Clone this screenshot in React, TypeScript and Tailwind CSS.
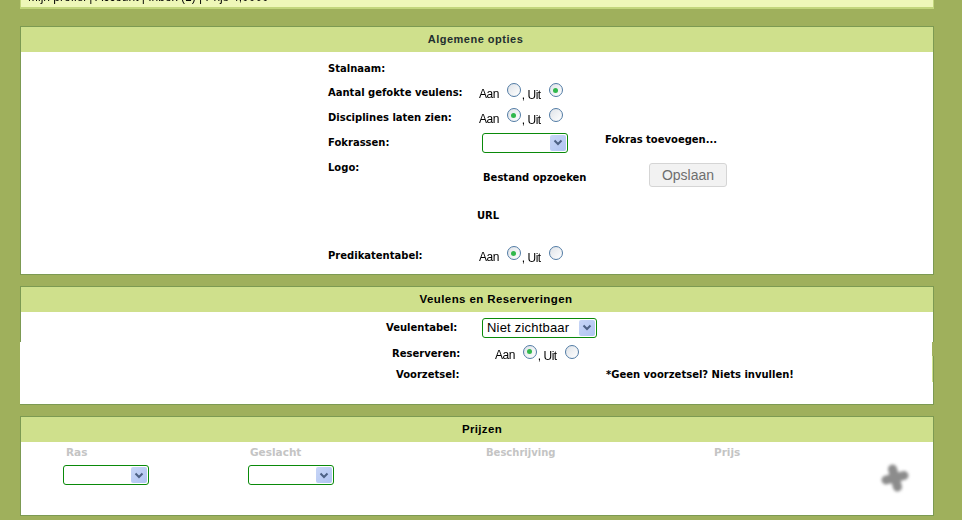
const labelFont = "font-['DejaVu_Sans','Verdana',sans-serif] font-bold text-[10px] leading-[12px] text-black";
const plainFont = "font-['Liberation_Sans',Arial,sans-serif] text-[12px] leading-[14px] text-black tracking-[-0.5px] opacity-[0.99]";
const mutedFont = "font-['DejaVu_Sans','Verdana',sans-serif] font-bold leading-[12px] text-[#c4c4c4]";

function Radio({ checked }: { checked?: boolean }) {
    return (
        <span className="flex h-[14px] w-[14px] items-center justify-center rounded-full border border-[#4f7aa3] bg-gradient-to-br from-[#dfe3e8] to-white">
            {checked && <span className="h-[5px] w-[5px] rounded-full bg-[#2fb84a]" />}
        </span>
    );
}

function OnOff({ on }: { on: boolean }) {
    return (
        <div className={`flex items-center ${plainFont}`}>
            <span className="mt-[2px]">Aan</span>
            <span className="ml-[8px] -mt-[5px]"><Radio checked={on} /></span>
            <span className="ml-[1px] mt-[4px]">, Uit</span>
            <span className="ml-[8px] -mt-[5px]"><Radio checked={!on} /></span>
        </div>
    );
}

function Select({ value, width }: { value?: string; width: string }) {
    return (
        <div className={`flex h-[20px] items-center justify-between rounded-[3px] border border-[#0a8a0a] bg-white pl-[4px] pr-[1px] ${width}`}>
            <span className="font-['Liberation_Sans',Arial,sans-serif] text-[13px] leading-none tracking-[0.2px] text-black">{value}</span>
            <span className="flex h-[16px] w-[16px] items-center justify-center rounded-[2px] bg-gradient-to-br from-[#c8d6f6] to-[#b0c4f2]">
                <svg width="10" height="7" viewBox="0 0 10 7" fill="none">
                    <path d="M1.5 1.5 5 5l3.5-3.5" stroke="#4d6185" strokeWidth="2" />
                </svg>
            </span>
        </div>
    );
}

function Panel({ title, titleClass, height, children }: { title: string; titleClass: string; height: string; children: React.ReactNode }) {
    return (
        <section className={`border border-[#7c9a52] bg-white ${height}`}>
            <h2 className={`flex h-[25px] items-center justify-center bg-[#cfe08c] font-['Liberation_Sans',Arial,sans-serif] font-bold ${titleClass}`}>
                {title}
            </h2>
            {children}
        </section>
    );
}

export default function App() {
    return (
        <div className="h-[520px] w-[962px] overflow-hidden bg-[#9fb05c] pl-[20px]">
            {/* Top bar, cut off by the window */}
            <div className="h-[9px] w-[914px] overflow-hidden border-x border-b-2 border-[#c2d67c] bg-[#eef7b8] pl-[7px]">
                <p className={`-mt-[10px] ${plainFont} tracking-normal`}>Mijn profiel | Account | Inbox (1) | Prijs 4,0000</p>
            </div>

            <div className="mt-[17px] flex w-[914px] flex-col gap-[11px]">
                {/* Algemene opties */}
                <Panel title="Algemene opties" titleClass="pr-[3px] text-[11px] tracking-[0.5px] text-[#1f2f2f]" height="h-[249px]">
                    <div className="pl-[307px]">
                        <div className={`flex h-[33px] items-center ${labelFont}`}>Stalnaam:</div>
                        <div className="-mt-[5px] flex h-[25px] items-center">
                            <span className={`w-[151px] ${labelFont}`}>Aantal gefokte veulens:</span>
                            <OnOff on={false} />
                        </div>
                        <div className="flex h-[25px] items-center">
                            <span className={`w-[151px] ${labelFont}`}>Disciplines laten zien:</span>
                            <OnOff on={true} />
                        </div>
                        <div className="flex h-[25px] items-center">
                            <span className={`w-[154px] ${labelFont}`}>Fokrassen:</span>
                            <Select width="w-[86px]" />
                            <span className={`ml-[37px] -mt-[5px] ${labelFont}`}>Fokras toevoegen...</span>
                        </div>
                        <div className="flex h-[47px]">
                            <span className={`mt-[7px] w-[155px] ${labelFont}`}>Logo:</span>
                            <span className={`mt-[17px] w-[166px] ${labelFont}`}>Bestand opzoeken</span>
                            <button className="mt-[8px] h-[24px] w-[78px] rounded-[3px] border border-[#d5d5d5] bg-[#f2f2f2] font-['Liberation_Sans',Arial,sans-serif] text-[14px] text-[#6e6e6e]">
                                Opslaan
                            </button>
                        </div>
                        <div className={`mt-[8px] pl-[149px] ${labelFont}`}>URL</div>
                        <div className="mt-[21px] flex h-[25px] items-center">
                            <span className={`w-[151px] ${labelFont}`}>Predikatentabel:</span>
                            <OnOff on={true} />
                        </div>
                    </div>
                </Panel>

                {/* Veulens en Reserveringen */}
                <div className="relative">
                    <Panel title="Veulens en Reserveringen" titleClass="pl-[38px] text-[11.5px] tracking-[0.4px] text-black" height="h-[119px]">
                        <div className="flex h-[31px] items-center pl-[365px]">
                            <span className={`w-[96px] ${labelFont}`}>Veulentabel:</span>
                            <Select value="Niet zichtbaar" width="w-[115px]" />
                        </div>
                        <div className="flex h-[22px] items-center pl-[371px]">
                            <span className={`w-[103px] ${labelFont}`}>Reserveren:</span>
                            <OnOff on={true} />
                        </div>
                        <div className="-mt-[2px] flex h-[23px] items-center pl-[375px]">
                            <span className={`w-[210px] ${labelFont}`}>Voorzetsel:</span>
                            <span className={labelFont}>*Geen voorzetsel? Niets invullen!</span>
                        </div>
                    </Panel>
                    {/* Row that overflows the panel border */}
                    <div className="absolute left-0 top-[56px] h-[62px] w-[1px] bg-white" />
                    <div className="absolute right-0 top-[56px] h-[14px] w-[2px] bg-[#9fb05c]" />
                    <div className="absolute right-[1px] top-[70px] h-[26px] w-[1px] bg-[#cfe08c]" />
                </div>

                {/* Prijzen */}
                <Panel title="Prijzen" titleClass="pl-[10px] text-[11.5px] tracking-[0.35px] text-black" height="h-[100px]">
                    <div className="relative flex h-[74px]">
                        <div className="ml-[42px] w-[185px]">
                            <p className={`ml-[3px] mt-[4px] text-[10.5px] ${mutedFont}`}>Ras</p>
                            <div className="mt-[7px]"><Select width="w-[86px]" /></div>
                        </div>
                        <div className="w-[238px]">
                            <p className={`ml-[2px] mt-[4px] text-[10.5px] ${mutedFont}`}>Geslacht</p>
                            <div className="mt-[7px]"><Select width="w-[86px]" /></div>
                        </div>
                        <p className={`mt-[5px] w-[228px] text-[10px] ${mutedFont}`}>Beschrijving</p>
                        <p className={`mt-[4px] text-[10.5px] ${mutedFont}`}>Prijs</p>
                        <svg className="absolute left-[858px] top-[20px] blur-[1.5px]" width="32" height="32" viewBox="0 0 32 32" fill="none">
                            <path d="M13.5 7 18.5 25M7 18 25 13.5" stroke="#8c8c8c" strokeWidth="9" strokeLinecap="round" />
                        </svg>
                    </div>
                </Panel>
            </div>
        </div>
    );
}
